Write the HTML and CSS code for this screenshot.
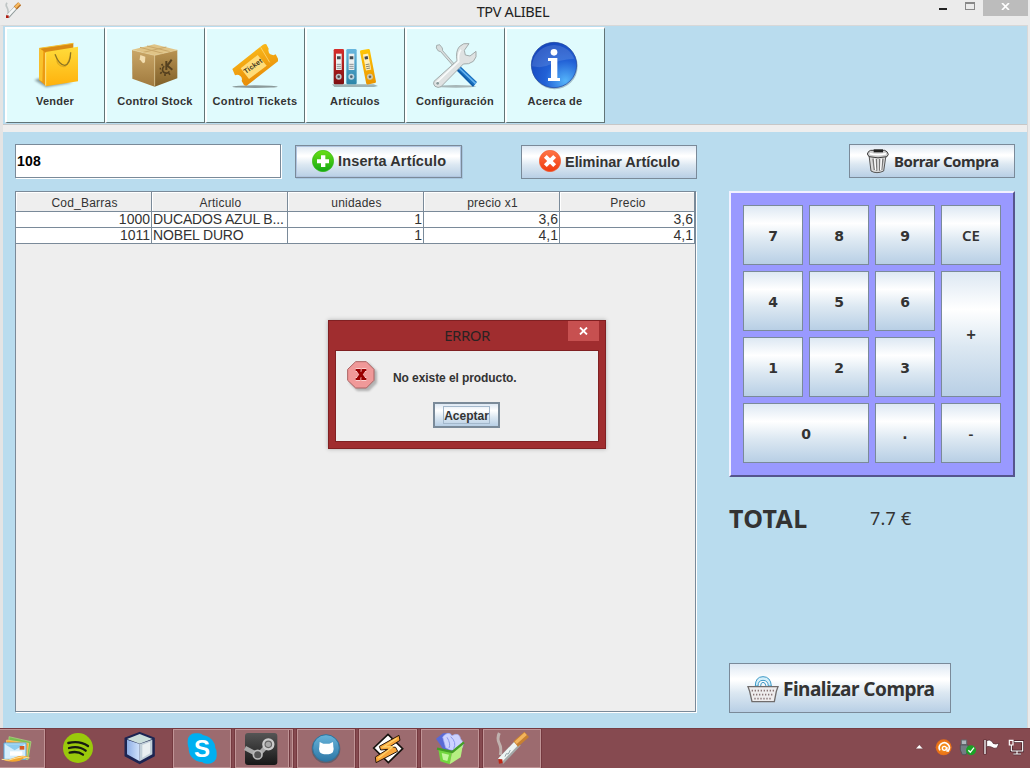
FILE: index.html
```html
<!DOCTYPE html>
<html lang="es">
<head>
<meta charset="utf-8">
<title>TPV ALIBEL</title>
<link rel="stylesheet" href="styles.css">
</head>
<body>
<div class="window">
  <header class="titlebar">
    <svg class="app-icon" viewBox="0 0 48 48"><path d="M6 2q-5 7 0 14 5 8 3 22" fill="none" stroke="#bfc5c5" stroke-width="5"/><path d="M8 44L37 12" stroke="#8e9999" stroke-width="12"/><path d="M8 42L37 11" stroke="#f5f7f7" stroke-width="8"/><path d="M31 18L44 5" stroke="#b77028" stroke-width="13"/><path d="M31 16L43 4" stroke="#f6b95e" stroke-width="7"/><path d="M3 40h8v8H3z" fill="#b11b10"/></svg>
    <h1 class="title">TPV ALIBEL</h1>
    <div class="win-controls">
      <span class="win-min"></span><span class="win-max"></span>
      <span class="win-close"><svg width="9" height="7" viewBox="0 0 9 7"><path d="M1 0L8 7M8 0L1 7" stroke="#fff" stroke-width="1.7"/></svg></span>
    </div>
  </header>

  <div class="client">
    <nav class="toolbar">
      <button class="tool"><svg viewBox="90 120 150 150">
        <defs>
          <linearGradient id="bag" x2="0" y2="1"><stop stop-color="#ffdc3b"/><stop offset="1" stop-color="#ffb10c"/></linearGradient>
          <filter id="soft" x="-30%" y="-100%" width="160%" height="300%"><feGaussianBlur stdDeviation="3"/></filter>
        </defs>
        <path d="M103 240l25-8 90 16-80 14z" fill="#66787a" opacity=".7" filter="url(#soft)"/>
        <path d="M118 145L220 130V150L137 166z" fill="#d98a14"/><path d="M118 145L220 130" stroke="#f4c132" stroke-width="3"/>
        <path d="M118 145L138 158V258L117 240z" fill="#ec9a12"/><path d="M118 145l12 8-3 92-10-6z" fill="#f9c22b"/>
        <path d="M137 156L234 140V244L137 259z" fill="url(#bag)"/><path d="M137 158V257" stroke="#ffe88a" stroke-width="3"/>
        <path d="M171 175q-2 22 20 25 12-1 20-32" fill="none" stroke="#e0ab20" stroke-width="4"/>
        <path d="M165 163q12 32 29 33 17-2 18-39" fill="none" stroke="#8d7524" stroke-width="4"/></svg><span>Vender</span></button>
      <button class="tool"><svg viewBox="390 120 150 150">
        <defs><linearGradient id="boxl" x2="0" y2="1"><stop stop-color="#c9a667"/><stop offset="1" stop-color="#a07a3e"/></linearGradient><linearGradient id="boxr" x2="0" y2="1"><stop stop-color="#b99352"/><stop offset="1" stop-color="#806029"/></linearGradient></defs>
        <path d="M397 149L463 133 532 150 463 166z" fill="#e0c487"/><path d="M420 142l69 18M441 138l69 17M430 157l69-16" stroke="#c9a769" stroke-width="3"/>
        <path d="M396 150L464 166V260L397 236z" fill="url(#boxl)"/><path d="M464 166L532 150V235L464 260z" fill="url(#boxr)"/><path d="M397 150L464 166 532 150M464 166v91" fill="none" stroke="#e8cf96" stroke-width="2"/>
        <path d="M421 165l15 5-1 17-6 3-10-12z" fill="#f2ddb0"/>
        <path d="M499 183v27M515 179L502 197L517 209" fill="none" stroke="#55401f" stroke-width="6"/>
        <path d="M493 199a11 11 0 1 0 15 15" fill="none" stroke="#55401f" stroke-width="5"/><path d="M488 197l-3-5M483 206h-4M485 216l-4 5M495 222v6M506 219l4 5" stroke="#55401f" stroke-width="5"/></svg><span>Control Stock</span></button>
      <button class="tool"><svg viewBox="690 120 150 150">
        <defs><linearGradient id="tick" x2=".4" y2="1"><stop stop-color="#ffc51f"/><stop offset="1" stop-color="#e78a07"/></linearGradient></defs>
        <ellipse cx="765" cy="260" rx="68" ry="4" fill="#8b9a9a"/>
        <path d="M697 207L789 134q6-3 10-1l7 13q-3 10 5 17 10 5 16 0l7 13v8L740 257q-5 1-8-2l-7-12q3-9-4-15-8-6-16-2z" fill="url(#tick)"/>
        <path d="M722 205L773 165 800 197 747 237z" fill="#ffdc79"/><path d="M782 142l27 45" stroke="#ffe28b" stroke-width="2"/>
        <text x="737" y="222" transform="rotate(-35 737 222)" class="ticket-text" textLength="63">Ticket</text></svg><span class="tickets">Control Tickets</span></button>
      <button class="tool"><svg viewBox="90 120 150 150">
        <path d="M96 253h125l13 5-12 3H103z" fill="#829596" opacity=".7"/>
        <defs><linearGradient id="red" x2="0" y2="1"><stop stop-color="#d52d2b"/><stop offset="1" stop-color="#7d1012"/></linearGradient><linearGradient id="blue" x2="0" y2="1"><stop stop-color="#68b7df"/><stop offset="1" stop-color="#2c86a9"/></linearGradient><linearGradient id="yel" x2="0" y2="1"><stop stop-color="#ffc506"/><stop offset="1" stop-color="#eb9600"/></linearGradient></defs>
        <rect x="101" y="147" width="31" height="106" rx="4" fill="url(#red)"/><rect x="108" y="161" width="17" height="49" fill="#edf0ef"/><path d="M111 171h11M111 175h11" stroke="#424951" stroke-width="5"/><path d="M110 193h13M110 199h13M110 205h13" stroke="#8a9295" stroke-width="3"/><circle cx="116" cy="230" r="9" fill="#bbc5ca"/><circle cx="116" cy="230" r="4" fill="#56494c"/>
        <rect x="139" y="147" width="31" height="106" rx="4" fill="url(#blue)"/><rect x="146" y="161" width="17" height="49" fill="#edf0ef"/><path d="M149 171h11M149 175h11" stroke="#424951" stroke-width="5"/><path d="M148 193h13M148 199h13M148 205h13" stroke="#8a9295" stroke-width="3"/><circle cx="154" cy="230" r="9" fill="#bbd3de"/><circle cx="154" cy="230" r="4" fill="#52656f"/>
        <g transform="rotate(-11 204 200)"><rect x="189" y="148" width="30" height="104" rx="4" fill="url(#yel)"/><rect x="196" y="161" width="16" height="49" fill="#fff0bd"/><path d="M199 173h10" stroke="#424951" stroke-width="9"/><path d="M198 193h12M198 199h12M198 205h12" stroke="#8c8a73" stroke-width="3"/><circle cx="204" cy="231" r="9" fill="#cdc7ad"/><circle cx="204" cy="231" r="4" fill="#68645a"/></g></svg><span>Artículos</span></button>
      <button class="tool"><svg viewBox="390 120 150 150">
        <ellipse cx="468" cy="259" rx="61" ry="4" fill="#a7b7b8"/>
        <path d="M410 136l9-2 8 10 1 8 41 47-5 4-42-48-7-2-6-9z" fill="#d7dddd" stroke="#8b9393" stroke-width="2"/>
        <path d="M466 208L478 196 531 246 519 261z" fill="#176fc0"/><path d="M474 201l53 50" stroke="#67b4ef" stroke-width="5"/><path d="M470 207l50 51" stroke="#0c4f91" stroke-width="3"/>
        <path d="M402 244L471 182q-5-28 7-42 12-13 29-9l-14 20 3 14 14 3 18-14q4 18-8 30-13 10-30 8L423 260q-9 5-18-1-7-7-3-15z" fill="#dfe2e2" stroke="#959e9e" stroke-width="2.5"/><path d="M410 247l66-63q-3-23 7-35" fill="none" stroke="#f8fafa" stroke-width="5"/><circle cx="413" cy="250" r="4" fill="#88999a"/></svg><span>Configuración</span></button>
      <button class="tool"><svg viewBox="690 120 150 150">
        <defs><radialGradient id="info" cx=".75" cy=".85" r=".9"><stop stop-color="#55b4fa"/><stop offset=".5" stop-color="#2261d6"/><stop offset="1" stop-color="#1648be"/></radialGradient></defs>
        <circle cx="764" cy="199" r="69" fill="#6e8da1" opacity=".55"/><circle cx="762" cy="195" r="68" fill="url(#info)" stroke="#1a3f9d" stroke-width="2"/><path d="M696 199a66 66 0 0 1 127-23q-48 3-71 17-23 13-56 6z" fill="#fff" opacity=".13"/>
        <circle cx="762" cy="157" r="10" fill="#fff"/><path d="M744 174h28v60h8v9h-36v-9h9v-51h-9z" fill="#fff"/></svg><span>Acerca de</span></button>
    </nav>

    <main class="workspace">
      <section class="sale">
        <div class="entry">
          <input class="code" value="108" aria-label="Código">
          <button class="btn insert"><svg width="22" height="22" viewBox="0 0 66 66"><defs><linearGradient id="green" x2="0" y2="1"><stop stop-color="#6bdf15"/><stop offset="1" stop-color="#13a914"/></linearGradient></defs><circle cx="33" cy="33" r="32" fill="url(#green)" stroke="#36b915" stroke-width="2"/><path d="M27 16h13v12h11v12H40v11H27V40H15V28h12z" fill="#fff"/></svg><span>Inserta Artículo</span></button>
          <button class="btn remove"><svg width="22" height="22" viewBox="0 0 66 66"><defs><linearGradient id="orange" x2="0" y2="1"><stop stop-color="#ff7648"/><stop offset="1" stop-color="#f03a0c"/></linearGradient></defs><circle cx="33" cy="33" r="32" fill="url(#orange)" stroke="#ef6039" stroke-width="2"/><path d="M19 19L47 47M47 19L19 47" stroke="#fff" stroke-width="12"/></svg><span>Eliminar Artículo</span></button>
        </div>
        <div class="table-pane">
          <table class="items">
            <colgroup><col class="c"><col class="c"><col class="c"><col class="c"><col></colgroup>
            <thead><tr><th>Cod_Barras</th><th>Articulo</th><th>unidades</th><th>precio x1</th><th>Precio</th></tr></thead>
            <tbody>
              <tr><td>1000</td><td class="name">DUCADOS AZUL B...</td><td class="units">1</td><td>3,6</td><td>3,6</td></tr>
              <tr><td>1011</td><td class="name">NOBEL DURO</td><td class="units">1</td><td>4,1</td><td>4,1</td></tr>
            </tbody>
          </table>
        </div>
      </section>

      <aside class="side">
        <button class="btn clear"><svg width="24" height="26" viewBox="0 0 72 78"><path d="M9 22L15 69q17 10 38 0l7-47z" fill="#d9d9d9" stroke="#555" stroke-width="3"/><path d="M21 32l4 34M31 33l1 35M41 33v35M51 32l-4 34" stroke="#777" stroke-width="4"/><path d="M26 32l3 34M46 32l-2 34" stroke="#fff" stroke-width="4"/><path d="M4 18q2-9 10-11h42q9 3 11 12l-4 7q-27 7-54 0z" fill="#ccc" stroke="#3e3e3e" stroke-width="3"/><path d="M11 17q25 6 49 0" fill="none" stroke="#fff" stroke-width="5"/><path d="M23 4h28v9H23z" fill="#222"/></svg><span>Borrar Compra</span></button>
        <div class="keypad">
          <button>7</button><button>8</button><button>9</button><button class="sym">CE</button>
          <button>4</button><button>5</button><button>6</button><button class="sym tall">+</button>
          <button>1</button><button>2</button><button>3</button>
          <button class="wide">0</button><button>.</button><button class="sym">-</button>
        </div>
        <div class="total"><strong>TOTAL</strong><span>7.7 €</span></div>
        <button class="btn finish"><svg width="32" height="28" viewBox="0 0 96 84"><path d="M25 33q0-28 23-28t25 28h-9q-1-17-16-17T33 33z" fill="#d4effa" stroke="#3b98c6" stroke-width="3"/><path d="M41 33q0-11 7-11t9 11" fill="none" stroke="#3b98c6" stroke-width="3"/><path d="M3 35h90l-5 14-6 31H15L8 49z" fill="#eeeced" stroke="#706c6c" stroke-width="4"/><path d="M14 47h70M18 59h62M22 71h54" stroke="#8a7678" stroke-width="5" stroke-dasharray="4 5"/></svg><span>Finalizar Compra</span></button>
      </aside>
    </main>
  </div>

  <footer class="taskbar">
    <div class="task active first"><svg width="45" height="38" viewBox="0 0 135 114"><path d="M27 20l66 15-9 54-59-8z" fill="#7abe50" stroke="#b0df86" stroke-width="2"/><path d="M20 30l66 10-6 48-63-9z" fill="#ffad35" stroke="#ffd27f" stroke-width="2"/><path d="M12 39h66v49H12z" fill="#d6eefb" stroke="#55a7dc" stroke-width="3"/><path d="M15 43h60L44 61z" fill="#8dccf0"/><path d="M30 64h37v13H30z" fill="#fff"/><path d="M59 48h14v11H59z" fill="#d55b22"/><path d="M3 86q15 8 37-2 30-14 52 0-18-4-33 8-31 9-56-6z" fill="#f4a62e"/><path d="M5 88q22 6 40-3 23-9 43-1" fill="none" stroke="#ffe29a" stroke-width="3"/></svg></div>
    <div class="task"><svg width="58" height="38" viewBox="0 0 174 114"><circle cx="87" cy="57" r="45" fill="#9ac90b"/><path d="M58 42q34-8 59 9M60 57q29-8 50 8M62 71q24-6 40 6" fill="none" stroke="#171c12" stroke-width="7" stroke-linecap="round"/></svg></div>
    <div class="task"><svg width="58" height="38" viewBox="0 0 174 114"><defs><linearGradient id="cube"><stop stop-color="#8eaee5"/><stop offset="1" stop-color="#d1e3fb"/></linearGradient></defs><path d="M43 28L86 11 129 28V80L86 103 43 80z" fill="#1d2552" stroke="#1d2552" stroke-width="5" stroke-linejoin="round"/><path d="M48 32L86 45V97L48 76z" fill="url(#cube)"/><path d="M86 45L124 32V76L86 97z" fill="#c1cfd8"/><path d="M94 48l23-9v34l-23 13z" fill="#e9eff1"/><path d="M48 30L86 15 124 30 86 44z" fill="#cbdedb"/></svg></div>
    <div class="task active"><svg width="56" height="36" viewBox="0 0 168 108"><rect x="41" y="10" width="54" height="54" rx="22" fill="#00aff0"/><rect x="74" y="44" width="54" height="57" rx="24" fill="#00aff0"/><circle cx="84" cy="56" r="40" fill="#00aff0"/><text x="84" y="81" class="skype">S</text></svg></div>
    <div class="task active steam"><svg width="51" height="36" viewBox="0 0 153 108"><defs><linearGradient id="steam" x2="0" y2="1"><stop stop-color="#555"/><stop offset="1" stop-color="#171717"/></linearGradient></defs><rect x="27" y="9" width="97" height="96" rx="9" fill="url(#steam)"/><path d="M27 54L67 75 98 42" fill="none" stroke="#aaa" stroke-width="13"/><circle cx="65" cy="74" r="13" fill="#555" stroke="#bbb" stroke-width="5"/><circle cx="97" cy="43" r="15" fill="#666" stroke="#ccc" stroke-width="7"/><circle cx="97" cy="43" r="8" fill="#aaa"/></svg></div>
    <div class="task active"><svg width="56" height="36" viewBox="0 0 168 108"><defs><linearGradient id="cat" x2="0" y2="1"><stop stop-color="#67b4da"/><stop offset="1" stop-color="#2e77a6"/></linearGradient></defs><circle cx="84" cy="57" r="43" fill="#4e5868" opacity=".7"/><circle cx="84" cy="54" r="40" fill="url(#cat)" stroke="#2e759f" stroke-width="3"/><path d="M65 36l11 5h18l11-5 1 14q3 8-1 16-5 7-20 7t-20-7q-4-8-1-16z" fill="#fff"/></svg></div>
    <div class="task active"><svg width="56" height="36" viewBox="0 0 168 108"><path d="M41 54L84 13 128 56 85 98z" fill="#fff" stroke="#16120e" stroke-width="5"/><path d="M117 16L58 49 62 60 83 58 46 81 48 98 113 64 107 52 90 50 120 31z" fill="#f9a63a" stroke="#28180c" stroke-width="3"/><path d="M110 25L70 51l28-1-43 35" fill="none" stroke="#ffd36d" stroke-width="4"/></svg></div>
    <div class="task active"><svg width="56" height="36" viewBox="0 0 168 108"><path d="M42 26l21-16 20-1 35 36-5 20-48-6z" fill="#5969d5"/><path d="M62 21q17-20 28-4 22-12 26 10 15 14 1 31-25 9-46-5z" fill="#ccd2ff" stroke="#a1abf2" stroke-width="2"/><path d="M86 20q19 17 9 36M75 22q12 19 6 32" fill="none" stroke="#8995ec" stroke-width="3"/><path d="M49 58L90 68 83 103 55 94z" fill="#71d63e"/><path d="M90 68L123 43 116 82 83 103z" fill="#b6ef82"/><path d="M45 56L91 66 126 37" fill="none" stroke="#439e25" stroke-width="7"/><path d="M59 69l22 5-5 19-13-4z" fill="#c3f79d"/></svg></div>
    <div class="task active"><svg width="56" height="36" viewBox="0 0 168 108"><path d="M46 9q-8 17 0 32 7 13 3 34" fill="none" stroke="#c9c4bf" stroke-width="9" opacity=".8"/><path d="M50 94L102 39" stroke="#a4a9a8" stroke-width="22"/><path d="M48 91L101 36" stroke="#edf5f3" stroke-width="15"/><path d="M95 42L128 13" stroke="#c78031" stroke-width="21"/><path d="M95 38L125 11" stroke="#f3b55d" stroke-width="10"/><path d="M43 87l12 1 1 11-11 2z" fill="#bd2816"/><path d="M63 80l4-9 6 1 6-12" fill="none" stroke="#94a5aa" stroke-width="3"/></svg></div>
    <svg class="tray" width="114" height="24" viewBox="0 0 342 72"><defs><radialGradient id="av"><stop stop-color="#fb9c22"/><stop offset="1" stop-color="#e66c16"/></radialGradient></defs><path d="M2 41L13 29 24 41z" fill="#fff" stroke="#542e34" stroke-width="1"/><circle cx="86" cy="37" r="24" fill="url(#av)"/><path d="M75 46a15 15 0 1 1 25 1" fill="none" stroke="#fff" stroke-width="5"/><circle cx="88" cy="40" r="6" fill="none" stroke="#fff" stroke-width="4"/><path d="M96 36v12h6" fill="none" stroke="#fff" stroke-width="4"/><path d="M139 15h16v14h-16z" fill="#aeb7bd" stroke="#626b70" stroke-width="3"/><path d="M136 30h23v15l-6 14h-11l-6-14z" fill="#737d84" stroke="#454c51" stroke-width="2"/><circle cx="168" cy="46" r="15" fill="#1ba127"/><path d="M160 46l6 6 11-14" fill="none" stroke="#fff" stroke-width="4"/><path d="M210 14v44" stroke="#452128" stroke-width="9"/><path d="M210 15v42" stroke="#fff" stroke-width="4"/><path d="M215 17q8-5 17 3l2 5q7 4 18 0l-6 14q-9 3-17-3-5-3-14-1z" fill="#fff" stroke="#452128" stroke-width="2"/><path d="M295 20h28v28h-34M306 49v8M295 57h23M289 31v20" fill="none" stroke="#452128" stroke-width="8"/><path d="M298 20h25v28h-34M306 49v8M295 57h23M289 30v18" fill="none" stroke="#fff" stroke-width="3.5"/><path d="M283 16h11v14h-11z" fill="#864a50" stroke="#fff" stroke-width="3.5"/></svg>
  </footer>

  <div class="dialog" role="dialog">
    <div class="dialog-title">ERROR</div>
    <span class="dialog-close"><svg width="9" height="8" viewBox="0 0 9 8"><path d="M1 .5L8 7.5M8 .5L1 7.5" stroke="#fff" stroke-width="1.8"/></svg></span>
    <div class="dialog-body">
      <svg class="stop" width="32" height="34" viewBox="0 0 96 102"><path d="M31 7h35l24 24v35L66 90H31L7 66V31z" fill="#777" opacity=".5" filter="url(#soft)"/><path d="M26 2h32l23 23v33L58 81H26L2 58V25z" fill="#f09999" stroke="#ab6262" stroke-width="3"/><g fill="none"><path d="M33 28L51 53M51 28L33 53M26 27h15M44 27h14M26 54h14M43 54h15" stroke="#fad0d0" stroke-width="12"/><path d="M33 28L51 53M51 28L33 53" stroke="#900" stroke-width="9"/><path d="M26 27h15M44 27h14M26 54h14M43 54h15" stroke="#900" stroke-width="6"/></g></svg>
      <p>No existe el producto.</p>
      <button class="accept"><span>Aceptar</span></button>
    </div>
  </div>
</div>
</body>
</html>
```
FILE: styles.css
```css
* { box-sizing: border-box; }
body { margin: 0; overflow: hidden; font-family: "Liberation Sans", Arial, sans-serif; color: #333; }
h1, p { margin: 0; }
button { margin: 0; padding: 0; border-radius: 0; font: inherit; color: #333; }
svg { display: block; flex: none; }
span { white-space: nowrap; }

.window { position: relative; width: 1030px; height: 768px; display: flex; flex-direction: column; background: #ebebeb; }
.titlebar { height: 25px; display: flex; align-items: flex-start; justify-content: space-between; }
.app-icon { width: 16px; height: 16px; margin: 2px 0 0 5px; }
.title { font: 400 14.5px/22px "Noto Sans", sans-serif; letter-spacing: -.35px; margin-left: 66px; color: #222; }
.win-controls { display: flex; align-items: flex-start; margin-right: 2px; }
.win-min { width: 8px; height: 2px; margin: 8px 18px 0 0; background: #222; }
.win-max { width: 10px; height: 8px; margin: 2px 8px 0 0; border: 1px solid #888; border-top-width: 2px; }
.win-close { width: 45px; height: 16px; display: flex; justify-content: center; padding-top: 3px; background: #bcbcbc; }

.client { height: 703px; margin-right: 2px; border: 1px solid #d8d8d8; border-width: 1px 1px 0 3px; border-left-color: #e4e4e4; display: flex; flex-direction: column; background: #eee; }
.toolbar { height: 98px; padding: 1px 0 0 2px; display: flex; background: #b9dcee; }
.tool { width: 100px; height: 96px; display: flex; flex-direction: column; align-items: center; padding: 11px 1px 0 0; background: #e0fbfd; border: solid #fff; border-width: 2px 1px 1px 2px; border-right-color: #617477; border-bottom-color: #617477; }
.tool svg { width: 50px; height: 50px; }
.tool span { font: bold 11px/14px "Liberation Sans", sans-serif; letter-spacing: .25px; margin-top: 4px; }
.tool .tickets { letter-spacing: .33px; }
.ticket-text { font: bold 21px "Liberation Sans", sans-serif; fill: #3c3520; }
.workspace { flex: 1; margin-top: 8px; padding: 12px 12px 0; display: flex; gap: 32px; background: #b9dcee; box-shadow: 0 -7px #eee, 0 -8px #c7c7c7; }

.sale { width: 682px; }
.entry { display: flex; height: 35px; margin-bottom: 12px; }
.code { width: 266px; height: 34px; padding: 0 1px; border: 1px solid #7a8a99; border-radius: 0; box-shadow: 1px 1px #fff; background: #fff; color: #000; font: bold 14px "Liberation Sans", sans-serif; letter-spacing: .25px; }
.btn { display: flex; align-items: center; border: 1px solid #7a8a99; background: linear-gradient(#dde8f3, #fff 30%, #fff 34%, #dce8f2 60%, #b8cfe5); font-weight: bold; }
.insert { width: 167px; height: 33px; margin: 1px 0 0 14px; padding: 0 0 1px 16px; gap: 4px; box-shadow: inset 0 0 0 1px #b1c5df, 1px 1px #a9c6df; font-size: 14.5px; letter-spacing: .15px; }
.remove { width: 176px; height: 34px; margin: 1px 0 0 59px; padding: 0 0 0 17px; gap: 4px; font-size: 14.5px; letter-spacing: -.04px; }
.remove svg { margin-top: -2px; }
.table-pane { width: 681px; height: 521px; border: 1px solid #7a8a99; box-shadow: 1px 1px #fff; background: #eee; }
.items { width: 679px; border-collapse: separate; border-spacing: 0; table-layout: fixed; }
.items .c { width: 136px; }
.items th { height: 20px; padding: 2px 0 0 2px; border: solid #7a8a99; border-width: 0 1px 1px 0; box-shadow: inset 1px 1px #fff; background: #eee; font: 12px/16px "Liberation Sans", sans-serif; letter-spacing: .22px; }
.items td { height: 16px; padding: 0 1px; border: solid #7a8a99; border-width: 0 1px 1px 0; background: #fff; font: 14px/15px "Liberation Sans", sans-serif; text-align: right; white-space: nowrap; }
.items .name { text-align: left; letter-spacing: -.15px; }

.side { width: 286px; display: flex; flex-direction: column; align-items: flex-start; }
.clear { width: 166px; height: 34px; margin-left: 120px; padding-left: 16px; gap: 4px; font: bold 15px "Noto Sans", sans-serif; letter-spacing: -.45px; }
.keypad { width: 286px; height: 286px; margin-top: 13px; padding: 12px; display: grid; grid-template: repeat(4, 60px) / repeat(4, 60px); gap: 6px; background: #9999ff; border: 2px solid; border-color: #f1f1ff #55558d #55558d #f1f1ff; }
.keypad button { border: 1px solid #7a8a99; background: linear-gradient(#dde8f3, #fff 30%, #dce8f2 60%, #b8cfe5); font: bold 14px "DejaVu Sans", sans-serif; padding: 2px 0 0; }
.keypad .sym { font: 600 15px "Noto Sans", sans-serif; padding: 0; }
.keypad .tall { grid-row: span 2; font-size: 17px; }
.keypad .wide { grid-column: span 2; }
.total { height: 36px; margin-top: 23px; display: flex; align-items: center; }
.total strong { width: 141px; font: bold 25px/36px "Noto Sans", sans-serif; letter-spacing: .3px; }
.total span { font: 18px/36px "Noto Sans", sans-serif; letter-spacing: .2px; }
.finish { width: 222px; height: 50px; margin-top: 127px; padding: 1px 0 0 17px; gap: 4px; font: bold 19px "Noto Sans", sans-serif; letter-spacing: -.5px; }

.taskbar { height: 40px; display: flex; gap: 4px; padding-top: 1px; background: #864a50; box-shadow: inset 0 1px #763e44; }
.task { flex: none; width: 58px; height: 39px; display: flex; justify-content: center; }
.active { border: 1px solid #c09496; background: #9c6b6f; box-shadow: 0 0 0 1px #75393f; }
.first { width: 45px; border-left: 0; }
.steam { justify-content: flex-start; background: linear-gradient(90deg, #9c6b6f 52px, #c09496 52px 53px, #70383e 53px 54px, #9c6b6f 54px); }
.tray { margin: 6px 0 0 370px; }
.skype { font: bold 72px "Liberation Sans", sans-serif; fill: #fff; text-anchor: middle; }

.dialog { position: absolute; left: 328px; top: 320px; width: 278px; height: 129px; padding: 0 7px; background: #a02d2f; border: 1px solid #802022; box-shadow: 0 0 4px #aaa; }
.dialog-title { height: 29px; padding-top: 3px; text-align: center; font: 15px/22px "Noto Sans", sans-serif; letter-spacing: -.5px; color: #2b2222; }
.dialog-close { position: absolute; right: 6px; top: 0; width: 31px; height: 20px; display: flex; align-items: center; justify-content: center; background: #c75050; }
.dialog-body { width: 264px; height: 92px; margin-left: -1px; display: grid; grid-template: 50px 1fr / 46px 1fr; border: 1px solid #802022; background: #eee; padding: 0 0 0 10px; }
.stop { margin: 10px 0 0 1px; }
.dialog p { font: bold 12px/16px "Liberation Sans", sans-serif; letter-spacing: -.08px; margin: 19px 0 0 1px; }
.accept { grid-column: span 2; width: 67px; height: 26px; margin: 1px 0 0 87px; padding: 0; border: 2px solid #7a8a99; background: linear-gradient(#dde8f3, #fff 30%, #dce8f2 60%, #b8cfe5); font: bold 12px/18px "Liberation Sans", sans-serif; }
.accept span { display: block; width: 47px; height: 18px; margin: 0 auto; border: 1px solid #a3b8cc; }
```
